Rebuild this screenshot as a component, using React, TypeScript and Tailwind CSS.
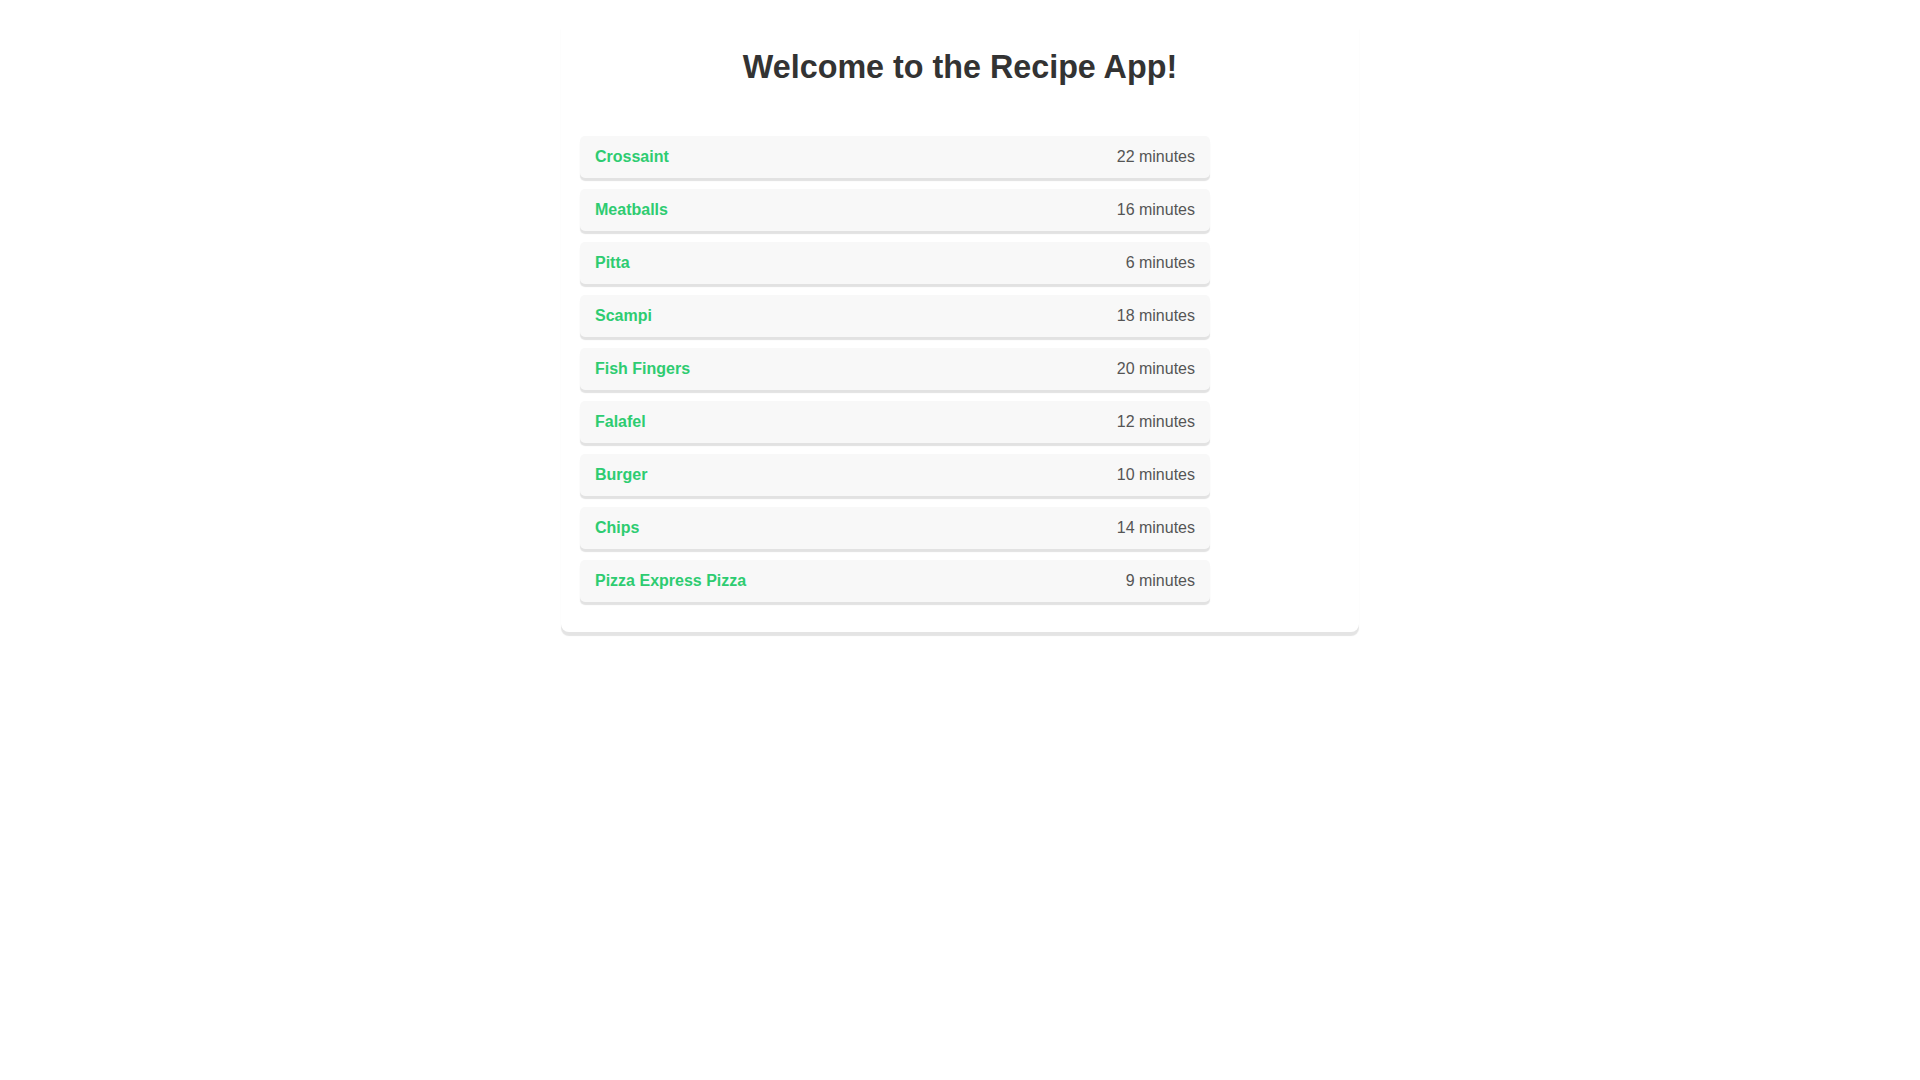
const recipes = [
  { name: 'Crossaint', time: 22 },
  { name: 'Meatballs', time: 16 },
  { name: 'Pitta', time: 6 },
  { name: 'Scampi', time: 18 },
  { name: 'Fish Fingers', time: 20 },
  { name: 'Falafel', time: 12 },
  { name: 'Burger', time: 10 },
  { name: 'Chips', time: 14 },
  { name: 'Pizza Express Pizza', time: 9 },
]

export default function App() {
  return (
    <div className="min-h-screen bg-white pt-5 font-['Liberation_Sans',Arial,sans-serif]">
      <div className="mx-auto w-[798px] rounded-lg bg-white pb-[19px] pt-[29px] shadow-[0_4px_1px_#e4e4e4]">
        <h1 className="mb-[50px] text-center text-[32.3px] font-bold leading-[37px] text-[#333]">
          Welcome to the Recipe App!
        </h1>
        <ul className="pl-[19px]">
          {recipes.map((r) => (
            <li
              key={r.name}
              className="mb-[11px] flex h-[42px] w-[630px] items-center justify-between rounded-[5px] bg-[#f8f8f8] px-[15px] text-base shadow-[0_3px_1px_#e2e2e2]"
            >
              <span className="font-bold text-[#2ecc71]">{r.name}</span>
              <span className="text-[#555]">{r.time} minutes</span>
            </li>
          ))}
        </ul>
      </div>
    </div>
  )
}
